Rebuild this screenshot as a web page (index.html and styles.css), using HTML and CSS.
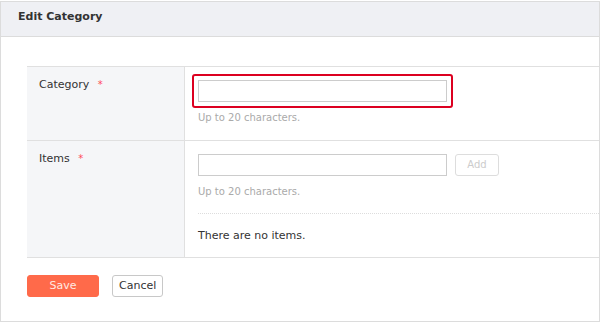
FILE: index.html
```html
<!DOCTYPE html>
<html lang="en">
<head>
  <meta charset="UTF-8">
  <title>Edit Category</title>
  <link rel="stylesheet" href="styles.css">
</head>
<body>

  <div class="panel">
    <div class="panel-head">Edit Category</div>

    <div class="panel-body">
      <div class="form-table">
        <!-- Category name -->
        <div class="form-row">
          <div class="form-label">Category <span class="req">*</span></div>
          <div class="form-value">
            <div class="focus-ring">
              <input type="text" class="text-input">
            </div>
            <p class="hint">Up to 20 characters.</p>
          </div>
        </div>

        <!-- Items -->
        <div class="form-row">
          <div class="form-label">Items <span class="req">*</span></div>
          <div class="form-value items-value">
            <div class="add-line">
              <input type="text" class="text-input">
              <button class="btn-add" disabled>Add</button>
            </div>
            <p class="hint">Up to 20 characters.</p>
            <div class="item-list">There are no items.</div>
          </div>
        </div>
      </div>

      <div class="actions">
        <button class="btn-save">Save</button>
        <button class="btn-cancel">Cancel</button>
      </div>
    </div>
  </div>

</body>
</html>
```

FILE: styles.css
```css
* {
  box-sizing: border-box;
}

body {
  margin: 0;
  padding-top: 1px;
  font-family: "DejaVu Sans", Verdana, sans-serif;
  font-size: 11px;
  line-height: 16px;
  color: #333;
  background: #fff;
}

.panel {
  border: 1px solid #dcdcdc;
  overflow: hidden;
}

.panel-head {
  background: #eff0f4;
  border-bottom: 1px solid #dcdcdc;
  padding: 7px 17px 11px;
  font-weight: bold;
}

.panel-body {
  padding: 29px 0 24px 26px;
}

.form-row {
  display: grid;
  grid-template-columns: 158px 1fr;
  border-top: 1px solid #e0e0e0;
}

.form-row:last-child {
  border-bottom: 1px solid #e0e0e0;
}

.form-label {
  background: #f5f6f8;
  border-right: 1px solid #e0e0e0;
  padding: 10px 12px;
}

.req {
  color: #ff4b5a;
  margin-left: 5px;
  font-size: 10px;
}

.form-value {
  padding: 13px 0 14px 13px;
}

.items-value {
  padding-bottom: 13px;
}

.focus-ring {
  width: 261px;
  margin: -6px 0 -6px -6px;
  padding: 4px;
  border: 2px solid #dc0020;
  border-radius: 3px;
}

.text-input {
  display: block;
  width: 249px;
  height: 22px;
  margin: 0;
  border: 1px solid #ccc;
  font: inherit;
}

.hint {
  margin: 8px 0 0;
  font-size: 10px;
  color: #aaa;
}

.add-line {
  display: flex;
  gap: 8px;
}

.btn-add {
  width: 44px;
  height: 22px;
  background: #fff;
  border: 1px solid #ddd;
  border-radius: 3px;
  color: #ccc;
  font: inherit;
  font-size: 10px;
}

.item-list {
  margin-top: 13px;
  border-top: 1px dotted #ddd;
  padding-top: 14px;
}

.actions {
  display: flex;
  gap: 13px;
  margin-top: 17px;
}

.actions button {
  height: 22px;
  border-radius: 3px;
  font: inherit;
  cursor: pointer;
}

.btn-save {
  width: 72px;
  background: #ff6a4a;
  border: 1px solid #ff6a4a;
  color: #ffe9e2;
}

.btn-cancel {
  width: 51px;
  background: #fff;
  border: 1px solid #c8c8c8;
  color: #333;
}
```
